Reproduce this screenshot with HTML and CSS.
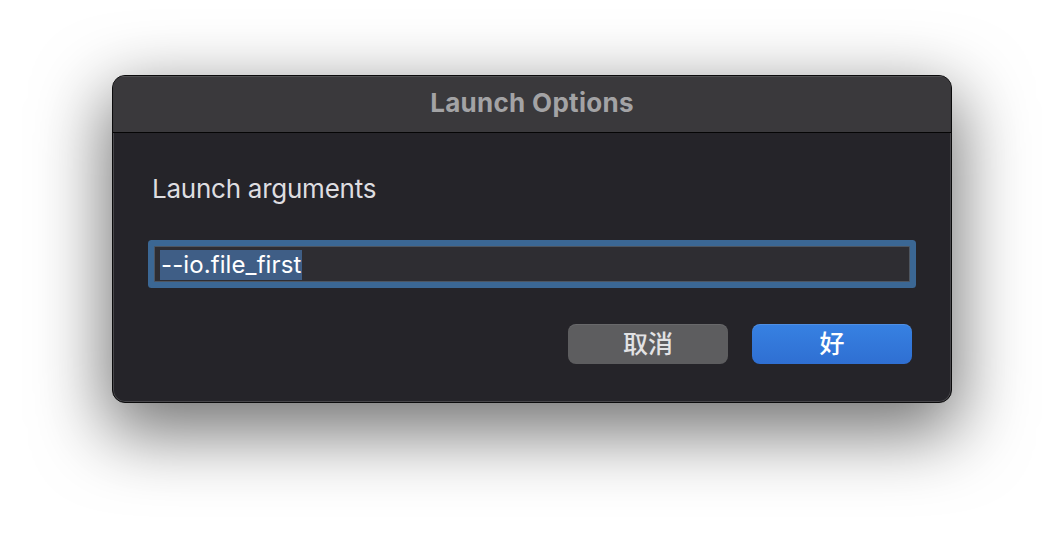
FILE: index.html
```html
<!DOCTYPE html>
<html lang="en">
<head>
  <meta charset="UTF-8" />
  <meta name="viewport" content="width=device-width, initial-scale=1.0"/>
  <title>Launch Options</title>
  <link rel="stylesheet" href="styles.css">
</head>
<body>
  <div class="dialog">
    <div class="titlebar">Launch Options</div>
    <div class="content">
      <p class="label">Launch arguments</p>
      <div class="field">
        <span class="selected">--io.file_first</span>
      </div>
      <div class="actions">
        <button class="btn btn-cancel">取消</button>
        <button class="btn btn-ok">好</button>
      </div>
    </div>
  </div>
</body>
</html>
```

FILE: styles.css
```css
body {
  margin: 0;
  height: 552px;
  background: #ffffff;
  font-family: 'Inter', 'Noto Sans CJK SC', sans-serif;
  display: flex;
  justify-content: center;
  align-items: flex-start;
  padding-top: 75px;
  box-sizing: border-box;
  overflow: hidden;
}

.dialog {
  width: 840px;
  height: 328px;
  box-sizing: border-box;
  border: 1px solid #0b0b0c;
  border-radius: 13px;
  overflow: hidden;
  background: #252429;
  box-shadow: 0 24px 70px 6px rgba(0, 0, 0, 0.55),
              inset 0 0 0 1px rgba(255, 255, 255, 0.16);
  display: flex;
  flex-direction: column;
}

.titlebar {
  height: 57px;
  flex: none;
  background: #3a393c;
  border-bottom: 1px solid #050505;
  box-shadow: inset 0 1px 0 rgba(255, 255, 255, 0.12);
  display: flex;
  align-items: center;
  justify-content: center;
  padding-bottom: 4px;
  box-sizing: border-box;
  font-size: 26px;
  font-weight: 700;
  color: #a3a3a5;
  letter-spacing: 0.3px;
}

.content {
  flex: 1;
  padding: 40px 39px 0 40px;
  display: flex;
  flex-direction: column;
}

.label {
  margin: 0 0 41px -1px;
  font-size: 26px;
  line-height: 32px;
  color: #dedde0;
  letter-spacing: -0.25px;
}

.field {
  height: 36px;
  margin: 0 2px 0 1px;
  box-sizing: border-box;
  background: #2e2d32;
  border: 1px solid #4d5560;
  border-radius: 1px;
  box-shadow: 0 0 0 6px #3b6794;
  padding: 3px 5px;
  display: flex;
}

.selected {
  display: inline-block;
  height: 30px;
  line-height: 30px;
  background: #3f5e86;
  color: #ffffff;
  font-size: 24px;
  padding: 0 1px;
  letter-spacing: 0.1px;
}

.actions {
  margin-top: 42px;
  display: flex;
  justify-content: flex-end;
  gap: 24px;
}

.btn {
  width: 160px;
  height: 40px;
  border: none;
  border-radius: 8px;
  font-family: 'Noto Sans CJK SC', sans-serif;
  font-size: 25px;
  font-weight: 500;
  line-height: 36px;
  padding: 0 0 4px;
  cursor: pointer;
}

.btn-cancel {
  background: #5d5d5f;
  color: #e2e2e4;
  box-shadow: inset 0 1px 0 rgba(255, 255, 255, 0.08);
}

.btn-ok {
  background: linear-gradient(to bottom, #3781e2, #2f6fd2);
  color: #ffffff;
  box-shadow: inset 0 1px 0 rgba(255, 255, 255, 0.12);
}
```
